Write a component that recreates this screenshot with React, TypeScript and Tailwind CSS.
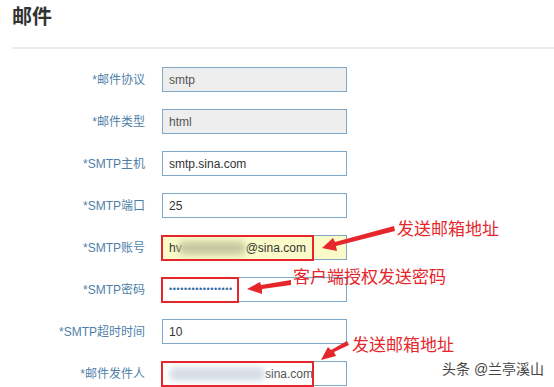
import { ReactNode } from 'react'

const font = { fontFamily: '"Liberation Sans", "Noto Sans CJK SC", sans-serif' }

type Row = {
  label: string
  value: ReactNode
  disabled?: boolean
  highlight?: boolean
  mark?: string
}

const Blur = ({ className }: { className: string }) => (
  <span className={`inline-block h-[14px] rounded-full blur-[3px] ${className}`} />
)

const FormRow = ({ row }: { row: Row }) => (
  <div className="flex items-center h-[25px]">
    <div className="w-[146px] text-right text-[12px] text-[#4f7fa9] pr-[1px]">{row.label}</div>
    <div
      className={`relative ml-[16px] w-[185px] h-[25px] border border-[#7fa7c7] flex items-center px-[6px] text-[12px] ${
        row.disabled ? 'bg-[#eeeeee] text-[#555]' : row.highlight ? 'bg-[#fafbc8] text-[#333]' : 'bg-white text-[#333]'
      }`}
    >
      {row.value}
      {row.mark && <div className={`absolute -left-[2px] -top-[1px] h-[26px] border-[2px] border-[#e5262b] ${row.mark}`} />}
    </div>
  </div>
)

export default function App() {
  const rows: Row[] = [
    { label: '*邮件协议', value: 'smtp', disabled: true },
    { label: '*邮件类型', value: 'html', disabled: true },
    { label: '*SMTP主机', value: 'smtp.sina.com' },
    { label: '*SMTP端口', value: '25' },
    {
      label: '*SMTP账号',
      highlight: true,
      mark: 'w-[153px]',
      value: (
        <span className="flex items-center">
          hv
          <Blur className="w-[68px] bg-[#c9caa2] -ml-[4px]" />
          @sina.com
        </span>
      ),
    },
    {
      label: '*SMTP密码',
      mark: 'w-[78px]',
      value: <span className="text-[9px] tracking-[0.6px] text-[#2f68a3]">•••••••••••••••••</span>,
    },
    { label: '*SMTP超时时间', value: '10' },
    {
      label: '*邮件发件人',
      mark: 'w-[153px]',
      value: (
        <span className="flex items-center text-[#555]">
          <Blur className="w-[96px] bg-[#d6dde6]" />
          sina.com
        </span>
      ),
    },
  ]

  return (
    <div className="relative w-[554px] h-[387px] bg-white overflow-hidden" style={font}>
      <div className="pl-[12px] pt-[3px] h-[47px]">
        <h1 className="text-[20px] font-bold text-[#333] leading-[28px]">邮件</h1>
      </div>
      <div className="ml-[12px] border-t-2 border-[#ebebeb]" />

      <div className="mt-[18px] flex flex-col gap-[17px]">
        {rows.map((r) => (
          <FormRow key={r.label} row={r} />
        ))}
      </div>

      {/* annotations */}
      <svg className="absolute left-0 top-0" width="554" height="387">
        <polygon points="394,226 395,231 336,246 337,251 322,248 333,238 335,242" fill="#e5262b" />
        <polygon points="291,280 291,285 262,289 262,294 247,289 260,282 261,285" fill="#e5262b" />
        <polygon points="347,341 349,345 334,352 336,356 321,360 328,347 331,350" fill="#e5262b" />
      </svg>
      <div className="absolute left-[397px] top-[219px] text-[17px] text-[#e5262b] leading-[22px]">发送邮箱地址</div>
      <div className="absolute left-[293px] top-[267px] text-[17px] text-[#e5262b] leading-[22px]">客户端授权发送密码</div>
      <div className="absolute left-[352px] top-[335px] text-[17px] text-[#e5262b] leading-[22px]">发送邮箱地址</div>
      <div className="absolute left-[442px] top-[360px] text-[14px] text-[#444] leading-[18px]">头条 @兰亭溪山</div>
    </div>
  )
}
